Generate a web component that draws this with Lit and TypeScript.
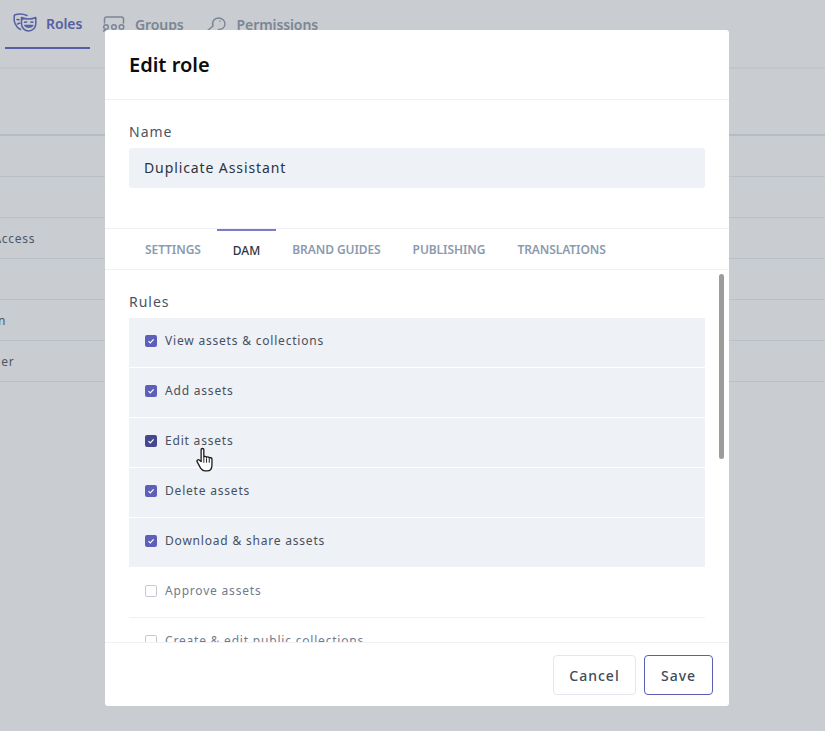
import { LitElement, html, css, svg } from "lit";
import { customElement } from "lit/decorators.js";
import { classMap } from "lit/directives/class-map.js";

const rules = [
  { label: "View assets & collections", on: true },
  { label: "Add assets", on: true },
  { label: "Edit assets", on: true, hover: true },
  { label: "Delete assets", on: true },
  { label: "Download & share assets", on: true },
  { label: "Approve assets", on: false },
  { label: "Create & edit public collections", on: false },
  { label: "Delete public collections", on: false },
];

const modalTabs = ["Settings", "DAM", "Brand guides", "Publishing", "Translations"];
const pageRows = ["", "", "Full Access", "", "Intern", "Partner"];

const masksIcon = svg`
  <path d="M14 3.500C10 1.800 5.500 1.600 1.500 3c-.6 3-.5 6 .5 8.500 1 2.500 3 4.800 5.500 6" />
  <path d="M4 7.500l2 .3M9.500 7l1-.3M4.500 12c.8-.8 1.600-1 2.500-.8" />
  <path d="M8.500 5.500c2.400 1.200 4.700 1.500 7.200 1.500s4.900-.5 7.100-1.500v6.200c0 4-3.100 7.300-7.100 7.300s-7.200-3.300-7.200-7.300z" />
  <path d="M11.500 10.200l2.200-.2M17.800 10l2.200.2" />
  <path d="M11.800 13.500c2.200 2.200 5.800 2.200 8 0z" />
`;
const groupsIcon = svg`
  <path d="M1.500 10V6a2 2 0 0 1 2-2h15a2 2 0 0 1 2 2v4" />
  <circle cx="3" cy="14" r="2.300" />
  <circle cx="11" cy="14" r="2.300" />
  <circle cx="18.500" cy="14" r="2.300" />
  <path d="M0.500 18l2-1" />
`;
const keyIcon = svg`
  <path d="M1.500 18.500l6.500-5.500C6.500 8.500 9.500 5 13.500 5c3.600 0 6.500 2.600 6.500 5.800 0 3.400-2.800 5.700-6.500 5.700" />
  <path d="M15 8.200v.01" />
`;

@customElement("app-root")
export class AppRoot extends LitElement {
  static styles = css`
    :host {
      display: block;
      position: relative;
      width: 825px;
      height: 731px;
      overflow: hidden;
      background: #c9ccd0;
      font-family: "Noto Sans", "Open Sans", sans-serif;
    }

    /* page behind the overlay */
    .page-tabs {
      display: flex;
      height: 67px;
      padding-left: 5px;
      border-bottom: 2px solid #c2c5ca;
    }
    .page-tab {
      display: flex;
      align-items: center;
      gap: 10px;
      height: 49px;
      box-sizing: border-box;
      font-size: 14px;
      font-weight: 600;
      letter-spacing: -0.1px;
      color: #7b8694;
    }
    .page-tab svg {
      flex: none;
      height: 24px;
      fill: none;
      stroke: currentColor;
      stroke-width: 1.500;
      stroke-linecap: round;
      stroke-linejoin: round;
    }
    .page-tab.active {
      width: 85px;
      gap: 9px;
      padding-left: 8px;
      color: #565fa3;
      border-bottom: 2px solid #565fa3;
    }
    .page-tab.groups {
      margin-left: 13px;
    }
    .page-tab.perms {
      margin-left: 21px;
    }
    .table {
      margin-top: 65px;
      border-top: 2px solid #b5bcc4;
    }
    .row {
      display: flex;
      align-items: center;
      margin-left: -33px;
      height: 40px;
      white-space: nowrap;
      font-size: 12px;
      letter-spacing: 0.7px;
      color: #4d5866;
    }
    .row-line {
      border-bottom: 1px solid #b9c0c8;
    }

    /* modal */
    .modal {
      position: absolute;
      left: 105px;
      top: 30px;
      width: 624px;
      height: 676px;
      display: flex;
      flex-direction: column;
      background: #fff;
      border-radius: 3px;
    }
    .modal-head {
      flex: none;
      height: 69px;
      display: flex;
      align-items: center;
      padding-left: 24px;
      border-bottom: 1px solid #eff1f4;
      font-size: 20px;
      font-weight: 600;
      color: #0b0d11;
    }
    .name-block {
      flex: none;
      height: 128px;
      padding: 22px 24px 0;
      box-sizing: border-box;
    }
    .field-label {
      font-size: 14px;
      line-height: 20px;
      letter-spacing: 1px;
      color: #4a5462;
    }
    .name-input {
      margin-top: 6px;
      height: 40px;
      box-sizing: border-box;
      display: flex;
      align-items: center;
      padding: 0 0 2px 15px;
      border-radius: 3px;
      background: #eef1f6;
      font-size: 14px;
      letter-spacing: 0.9px;
      color: #2b3442;
    }
    .tabs {
      flex: none;
      display: flex;
      height: 40px;
      padding-left: 24px;
      border-top: 1px solid #eff1f4;
      border-bottom: 1px solid #eff1f4;
    }
    .tab {
      display: flex;
      align-items: center;
      padding: 0 16px;
      font-size: 12px;
      font-weight: 600;
      letter-spacing: -0.08px;
      text-transform: uppercase;
      color: #8b9ab0;
    }
    .tab.active {
      color: #2d3440;
      font-weight: 500;
      letter-spacing: 0;
      height: 48px;
      box-sizing: border-box;
      padding-bottom: 8px;
      border-top: 2px solid #7a7cc4;
    }
    .body {
      flex: 1;
      min-height: 0;
      overflow: hidden;
      padding: 22px 24px 0;
    }
    .rules {
      margin-top: 6px;
      display: flex;
      flex-direction: column;
    }
    .rule {
      display: flex;
      align-items: center;
      gap: 8px;
      height: 49px;
      flex: none;
      box-sizing: border-box;
      padding: 0 0 4px 16px;
      margin-bottom: 1px;
      font-size: 12px;
      letter-spacing: 0.8px;
      color: #6f7c8d;
    }
    .rule.on {
      background: #eef1f6;
      color: #47505e;
    }
    .rule.off {
      margin-bottom: 0;
      height: 50px;
      border-bottom: 1px solid #eff1f4;
    }
    .box {
      width: 12px;
      height: 12px;
      flex: none;
      box-sizing: border-box;
      border: 1px solid #c3c9d2;
      border-radius: 2px;
      background: #fff;
      display: flex;
    }
    .on .box {
      border: none;
      background: #5d5fb8;
    }
    .hover .box {
      background: #45478f;
    }
    .box svg {
      width: 12px;
      height: 12px;
      fill: none;
      stroke: #fff;
      stroke-width: 1.200;
    }
    .foot {
      flex: none;
      height: 64px;
      display: flex;
      justify-content: flex-end;
      gap: 8px;
      padding: 12px 16px 0 0;
      box-sizing: border-box;
      border-top: 1px solid #eff1f4;
    }
    .btn {
      height: 40px;
      box-sizing: border-box;
      display: flex;
      align-items: center;
      justify-content: center;
      border: 1px solid #e4e7ee;
      border-radius: 4px;
      background: #fff;
      font-size: 14px;
      font-weight: 500;
      letter-spacing: 1px;
      color: #3f4a5a;
    }
    .btn.cancel {
      width: 83px;
    }
    .btn.save {
      width: 69px;
      border-color: #5a5fb4;
    }
    .scroll-thumb {
      position: absolute;
      left: 614px;
      top: 244px;
      width: 5px;
      height: 185px;
      border-radius: 3px;
      background: #9c9c9c;
    }
    .cursor {
      position: absolute;
      left: 196px;
      top: 447px;
      width: 20px;
      height: 26px;
    }
  `;

  render() {
    return html`
      <div class="page-tabs">
        <div class="page-tab active">
          <svg width="24" viewBox="0 0 24 24">${masksIcon}</svg>Roles
        </div>
        <div class="page-tab groups">
          <svg width="22" viewBox="0 0 22 24">${groupsIcon}</svg>Groups
        </div>
        <div class="page-tab perms">
          <svg width="22" viewBox="0 0 22 24">${keyIcon}</svg>Permissions
        </div>
      </div>
      <div class="table">
        ${pageRows.map((r) => html`<div class="row-line"><div class="row">${r}</div></div>`)}
      </div>

      <div class="modal">
        <div class="modal-head">Edit role</div>
        <div class="name-block">
          <div class="field-label">Name</div>
          <div class="name-input">Duplicate Assistant</div>
        </div>
        <div class="tabs">
          ${modalTabs.map(
            (t) => html`<div class=${classMap({ tab: true, active: t === "DAM" })}>${t}</div>`
          )}
        </div>
        <div class="body">
          <div class="field-label">Rules</div>
          <div class="rules">
            ${rules.map(
              (r) => html`<div class=${classMap({ rule: true, on: r.on, off: !r.on, hover: !!r.hover })}>
                <span class="box">
                  ${r.on ? html`<svg viewBox="0 0 12 12"><path d="M3.500 6.200l1.800 1.800 3.300-3.600" /></svg>` : ""}
                </span>
                ${r.label}
              </div>`
            )}
          </div>
        </div>
        <div class="foot">
          <div class="btn cancel">Cancel</div>
          <div class="btn save">Save</div>
        </div>
        <div class="scroll-thumb"></div>
      </div>

      <svg class="cursor" viewBox="0 0 18 24">
        <path
          d="M4.500 2.500c0-1.500 2.500-1.500 2.500 0v7c0-1 2.500-1.200 2.500.3 0-1 2.500-1 2.500.5 0-.8 2.500-.8 2.500.7v5.500c0 3-1.500 5.500-4.500 5.500H8c-2 0-3-1-4-2.500L1 14c-1-1.500.8-3 2-1.800l1.500 1.300z"
          fill="#fff"
          stroke="#1c1c1c"
          stroke-width="1.200"
          stroke-linejoin="round"
        />
        <path d="M7 10v4.500M9.500 10.500v4M12 11v3.500" stroke="#1c1c1c" stroke-width="0.900" fill="none" />
      </svg>
    `;
  }
}
